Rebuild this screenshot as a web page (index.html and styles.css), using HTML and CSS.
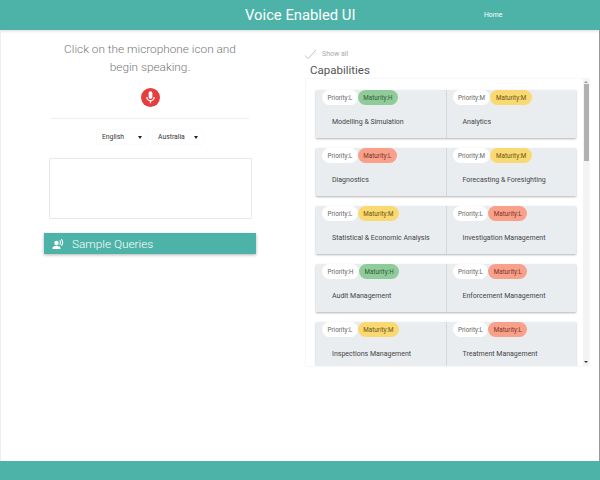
FILE: index.html
```html
<!DOCTYPE html>
<html lang="en">
<head>
  <meta charset="UTF-8">
  <title>Voice Enabled UI</title>
  <link rel="stylesheet" href="styles.css">
</head>
<body>
  <header class="topbar">
    <h1 class="topbar-title">Voice Enabled UI</h1>
    <a class="topbar-link">Home</a>
  </header>

  <main class="content">
    <section class="voice-panel">
      <p class="prompt">Click on the microphone icon and begin speaking.</p>
      <button class="mic-btn">
        <svg viewBox="0 0 24 24" width="15" height="15" fill="#fff">
          <path d="M12 14c1.66 0 3-1.34 3-3V5c0-1.66-1.34-3-3-3S9 3.34 9 5v6c0 1.66 1.34 3 3 3z"/>
          <path d="M17 11c0 2.76-2.24 5-5 5s-5-2.24-5-5H5c0 3.53 2.61 6.43 6 6.920V21h2v-3.080c3.390-.49 6-3.390 6-6.920h-2z"/>
        </svg>
      </button>
      <hr class="divider">
      <div class="selects">
        <div class="select"><span>English</span><span class="caret"></span></div>
        <div class="select"><span>Australia</span><span class="caret"></span></div>
      </div>
      <div class="transcript"></div>
      <div class="sample-bar">
        <svg viewBox="0 0 24 24" width="12" height="12" fill="#fff">
          <circle cx="9" cy="10" r="4.500"/>
          <path d="M1 22v-2c0-3 5-4.500 8-4.500s8 1.500 8 4.500v2z"/>
          <path d="M16 4c3 1.800 3 8 0 10l-1.300-1.500c1.600-1.300 1.600-5.700 0-7z"/>
          <path d="M19 1.500c4.500 3 4.500 12 0 15l-1.200-1.300c3.200-2.800 3.200-9.600 0-12.400z"/>
        </svg>
        <span>Sample Queries</span>
      </div>
    </section>

    <section class="cap-panel">
      <div class="show-all">
        <svg viewBox="0 0 14 12" width="13" height="11" fill="none" stroke="#bdbdbd" stroke-width="1">
          <path d="M1 7l3.500 3.500L13 1"/>
        </svg>
        <span>Show all</span>
      </div>
      <h2 class="cap-title">Capabilities</h2>
      <div class="cap-scroll">
        <div class="cap-list">
          <div class="cap-row">
            <div class="cap-card">
              <div class="pills"><span class="pill">Priority:L</span><span class="pill high">Maturity:H</span></div>
              <div class="cap-name">Modelling &amp; Simulation</div>
            </div>
            <div class="cap-card">
              <div class="pills"><span class="pill">Priority:M</span><span class="pill mid">Maturity:M</span></div>
              <div class="cap-name">Analytics</div>
            </div>
          </div>
          <div class="cap-row">
            <div class="cap-card">
              <div class="pills"><span class="pill">Priority:L</span><span class="pill low">Maturity:L</span></div>
              <div class="cap-name">Diagnostics</div>
            </div>
            <div class="cap-card">
              <div class="pills"><span class="pill">Priority:M</span><span class="pill mid">Maturity:M</span></div>
              <div class="cap-name">Forecasting &amp; Foresighting</div>
            </div>
          </div>
          <div class="cap-row">
            <div class="cap-card">
              <div class="pills"><span class="pill">Priority:L</span><span class="pill mid">Maturity:M</span></div>
              <div class="cap-name">Statistical &amp; Economic Analysis</div>
            </div>
            <div class="cap-card">
              <div class="pills"><span class="pill">Priority:L</span><span class="pill low">Maturity:L</span></div>
              <div class="cap-name">Investigation Management</div>
            </div>
          </div>
          <div class="cap-row">
            <div class="cap-card">
              <div class="pills"><span class="pill">Priority:H</span><span class="pill high">Maturity:H</span></div>
              <div class="cap-name">Audit Management</div>
            </div>
            <div class="cap-card">
              <div class="pills"><span class="pill">Priority:L</span><span class="pill low">Maturity:L</span></div>
              <div class="cap-name">Enforcement Management</div>
            </div>
          </div>
          <div class="cap-row">
            <div class="cap-card">
              <div class="pills"><span class="pill">Priority:L</span><span class="pill mid">Maturity:M</span></div>
              <div class="cap-name">Inspections Management</div>
            </div>
            <div class="cap-card">
              <div class="pills"><span class="pill">Priority:L</span><span class="pill low">Maturity:L</span></div>
              <div class="cap-name">Treatment Management</div>
            </div>
          </div>
        </div>
        <div class="scrollbar">
          <span class="arrow up"></span>
          <div class="thumb"></div>
          <span class="arrow down"></span>
        </div>
      </div>
    </section>
  </main>

  <footer class="bottombar"></footer>
</body>
</html>
```

FILE: styles.css
```css
html, body {
  height: 100%;
}

body {
  margin: 0;
  display: flex;
  flex-direction: column;
  height: 480px;
  overflow: hidden;
  background: #fff;
  font-family: 'Roboto', sans-serif;
  color: #333;
}

/* Top bar */
.topbar {
  flex: none;
  height: 30px;
  display: grid;
  grid-template-columns: 484px auto;
  align-items: center;
  background: #4db3a8;
  box-shadow: 0 1px 3px rgba(0, 0, 0, 0.15);
}

.topbar-title {
  margin: 0;
  padding-left: 245px;
  font-size: 14.800px;
  font-weight: 400;
  color: #fff;
  white-space: nowrap;
}

.topbar-link {
  font-size: 6.800px;
  color: #fff;
}

/* Main */
.content {
  flex: 1;
  display: flex;
  min-height: 0;
  box-shadow: inset 1px 0 #eee, inset -1px 0 #999;
}

.voice-panel {
  flex: none;
  width: 300px;
  box-sizing: border-box;
  padding: 10px 44px 0;
  display: flex;
  flex-direction: column;
  align-items: center;
}

.prompt {
  margin: 0;
  width: 190px;
  font-size: 11.800px;
  font-weight: 300;
  line-height: 18px;
  text-align: center;
  color: #777;
}

.mic-btn {
  width: 19px;
  height: 19px;
  margin-top: 12px;
  padding: 0;
  border: 0;
  border-radius: 50%;
  background: #e53e3e;
  display: flex;
  align-items: center;
  justify-content: center;
}

.divider {
  width: 198px;
  margin: 11px 0 0;
  border: 0;
  border-top: 1px solid #eee;
}

.selects {
  display: flex;
  gap: 6px;
  margin-top: 11px;
}

.select {
  width: 50px;
  height: 14px;
  box-sizing: border-box;
  padding: 0 5px;
  display: flex;
  align-items: center;
  justify-content: space-between;
  font-size: 6.800px;
  color: #333;
  box-shadow: 0 0 2px rgba(0, 0, 0, 0.06);
}

.caret {
  border-left: 2px solid transparent;
  border-right: 2px solid transparent;
  border-top: 3px solid #222;
}

.transcript {
  width: 203px;
  height: 61px;
  box-sizing: border-box;
  margin-top: 14px;
  border: 1px solid #e8e8e8;
  border-radius: 1px;
}

.sample-bar {
  align-self: stretch;
  height: 21px;
  margin-top: 14px;
  padding-left: 8px;
  display: flex;
  align-items: center;
  gap: 8px;
  background: #4db3a8;
  box-shadow: 0 1px 3px rgba(0, 0, 0, 0.3);
  color: #fff;
  font-size: 11.800px;
  font-weight: 300;
}

/* Capabilities */
.cap-panel {
  flex: 1;
  padding: 18px 11px 0 4px;
  min-width: 0;
}

.show-all {
  display: flex;
  align-items: center;
  gap: 5px;
  height: 12px;
  font-size: 7px;
  color: #aaa;
}

.cap-title {
  margin: 2px 0 1px 6px;
  font-size: 11.500px;
  font-weight: 400;
  line-height: 16px;
  color: #555;
}

.cap-scroll {
  height: 287px;
  margin-left: 2px;
  display: flex;
  overflow: hidden;
  box-shadow: 0 0 2px rgba(0, 0, 0, 0.1);
}

.cap-list {
  flex: 1;
  padding: 11px 7px 0 10px;
  display: flex;
  flex-direction: column;
  gap: 10px;
}

.cap-row {
  flex: none;
  display: flex;
  gap: 1px;
  height: 48px;
  background: #d5d8da;
  box-shadow: 0 1px 2px rgba(0, 0, 0, 0.3);
}

.cap-card {
  flex: 1;
  background: #e9edf0;
  padding-left: 6px;
}

.pills {
  display: flex;
}

.pill {
  height: 15px;
  padding: 0 5.500px;
  display: flex;
  align-items: center;
  border-radius: 8px;
  font-size: 6.300px;
  background: #fff;
  color: #666;
}

.pill.high { background: #90cc9a; color: #2f5a38; }
.pill.mid { background: #fbd972; color: #6a5414; }
.pill.low { background: #f9a08a; color: #7a3426; }

.cap-name {
  margin: 11px 0 0 10px;
  font-size: 7px;
  line-height: 12px;
  color: #444;
}

.scrollbar {
  flex: none;
  width: 6px;
  background: #f3f3f3;
  display: flex;
  flex-direction: column;
  align-items: center;
  justify-content: space-between;
}

.thumb {
  width: 5px;
  height: 77px;
  margin-top: 1px;
  margin-bottom: auto;
  background: #b0b0b0;
}

.arrow {
  flex: none;
  border-left: 2px solid transparent;
  border-right: 2px solid transparent;
}

.arrow.up { margin-top: 2px; border-bottom: 2px solid #999; }
.arrow.down { margin-bottom: 3px; border-top: 2px solid #333; }

/* Bottom bar */
.bottombar {
  flex: none;
  height: 19px;
  background: #4db3a8;
}
```
